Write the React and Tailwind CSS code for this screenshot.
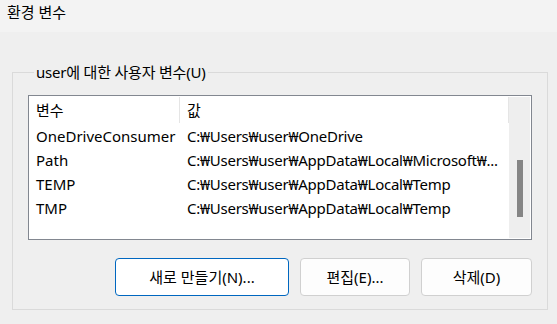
import React from 'react';

const rows = [
  { name: 'OneDriveConsumer', value: 'C:₩Users₩user₩OneDrive' },
  { name: 'Path', value: 'C:₩Users₩user₩AppData₩Local₩Microsoft₩...' },
  { name: 'TEMP', value: 'C:₩Users₩user₩AppData₩Local₩Temp' },
  { name: 'TMP', value: 'C:₩Users₩user₩AppData₩Local₩Temp' },
];

const font = "font-['Noto_Sans','Noto_Sans_CJK_KR',sans-serif]";

const App = () => {
  return (
    <div className={`w-[557px] h-[324px] overflow-hidden bg-[#efefef] flex flex-col text-black text-[15px] ${font}`}>
      {/* Title bar */}
      <header className="h-[32px] bg-[#f3f3f3] px-[7px] pt-[3px] shrink-0">
        <span className="leading-[18px] block">환경 변수</span>
      </header>

      {/* Group box */}
      <fieldset className="ml-[12px] mr-[9px] mt-[30px] border border-[#dadada] pl-[15px] pr-[15px] pb-[13px]">
        <legend className="ml-[6px] px-[2px] leading-[20px] tracking-[-0.2px]">user에 대한 사용자 변수(U)</legend>

        {/* List view */}
        <div className="mt-[13px] h-[145px] border border-[#828790] bg-white flex">
          <div className="flex-1 flex flex-col">
            <div className="h-[28px] flex shrink-0">
              <div className="w-[151px] flex items-center pl-[7px] border-r border-[#e5e5e5] my-[1px]">변수</div>
              <div className="flex-1 flex items-center pl-[7px] border-r border-[#e5e5e5] my-[1px]">값</div>
            </div>
            {rows.map((r) => (
              <div key={r.name} className="h-[24px] flex items-center whitespace-nowrap">
                <div className="w-[151px] pl-[7px]">{r.name}</div>
                <div className="flex-1 pl-[7px] overflow-hidden tracking-[-0.25px]">{r.value}</div>
              </div>
            ))}
          </div>

          {/* Scrollbar */}
          <div className="w-[21px] my-[1px] mr-[1px] bg-[#eeeeee] flex justify-center pt-[63px]">
            <div className="w-[6px] h-[57px] bg-[#858585]" />
          </div>
        </div>

        {/* Buttons */}
        <div className="mt-[18px] flex justify-end gap-[11px]">
          <button className="w-[174px] h-[38px] rounded-[4px] border border-[#0067c0] bg-white">
            새로 만들기(N)...
          </button>
          <button className="w-[110px] h-[38px] rounded-[4px] border border-[#d0d0d0] bg-[#fdfdfd]">
            편집(E)...
          </button>
          <button className="w-[111px] h-[38px] rounded-[4px] border border-[#d0d0d0] bg-[#fdfdfd]">
            삭제(D)
          </button>
        </div>
      </fieldset>
    </div>
  );
};

export default App;
